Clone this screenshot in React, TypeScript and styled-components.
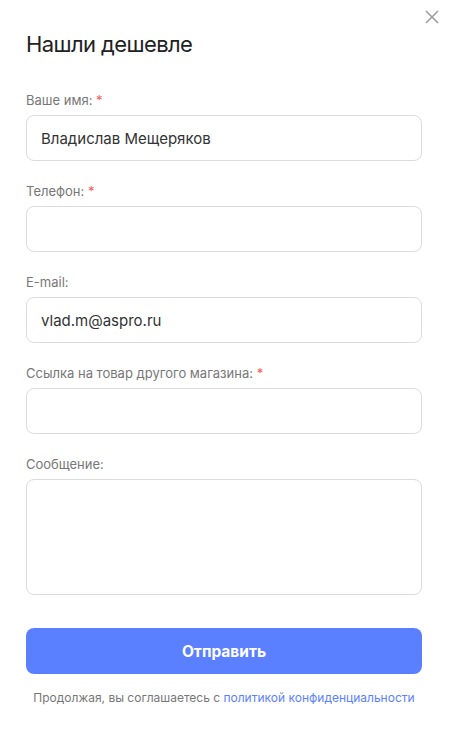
import React from "react";
import styled, { createGlobalStyle } from "styled-components";

const Global = createGlobalStyle`
  html, body { margin: 0; padding: 0; background: #fff; }
  body { font-family: Inter, "Noto Sans", sans-serif; -webkit-font-smoothing: antialiased; }
  * { box-sizing: border-box; }
`;

const Modal = styled.div`
  position: relative;
  width: 449px;
  min-height: 737px;
  background: #fff;
  padding: 31px 27px 0 26px;
  display: flex;
  flex-direction: column;
`;

const Close = styled.button`
  position: absolute;
  top: 9px;
  right: 9px;
  width: 16px;
  height: 16px;
  padding: 0;
  border: 0;
  background: transparent;
  display: flex;
  align-items: center;
  justify-content: center;
  cursor: pointer;
`;

const Title = styled.h1`
  margin: 0 0 34px;
  font-size: 22px;
  line-height: 26px;
  font-weight: 400;
  letter-spacing: -0.6px;
  color: #222;
`;

const Fields = styled.div`
  display: flex;
  flex-direction: column;
  gap: 21px;
`;

const Field = styled.label`
  display: flex;
  flex-direction: column;
  gap: 6px;
`;

const Label = styled.span`
  font-size: 13px;
  line-height: 18px;
  color: #777;
`;

const Star = styled.span`
  color: #f25a5a;
`;

const Input = styled.input`
  height: 46px;
  width: 100%;
  border: 1px solid #dcdcdc;
  border-radius: 8px;
  padding: 0 14px;
  font-family: inherit;
  font-size: 15px;
  color: #333;
  background: #fff;
  outline: none;
`;

const TextArea = styled.textarea`
  height: 116px;
  width: 100%;
  border: 1px solid #dcdcdc;
  border-radius: 8px;
  padding: 12px 14px;
  font-family: inherit;
  font-size: 15px;
  color: #333;
  resize: none;
  outline: none;
  display: block;
`;

const Submit = styled.button`
  margin-top: 33px;
  height: 46px;
  width: 100%;
  border: 0;
  border-radius: 8px;
  background: #5b80ff;
  color: #fff;
  font-family: inherit;
  font-size: 15.5px;
  font-weight: 700;
  cursor: pointer;
`;

const Note = styled.p`
  margin: 16px 0 0;
  text-align: center;
  font-size: 12px;
  line-height: 16px;
  color: #777;
`;

const Link = styled.a`
  color: #5b80ff;
  text-decoration: none;
`;

export default function App() {
  return (
    <>
      <Global />
      <Modal>
        <Close aria-label="Закрыть">
          <svg width="14" height="14" viewBox="0 0 14 14">
            <path d="M1 1 L13 13 M13 1 L1 13" stroke="#9a9a9a" strokeWidth="1.5" fill="none" />
          </svg>
        </Close>
        <Title>Нашли дешевле</Title>
        <Fields>
          <Field>
            <Label>Ваше имя: <Star>*</Star></Label>
            <Input defaultValue="Владислав Мещеряков" />
          </Field>
          <Field>
            <Label>Телефон: <Star>*</Star></Label>
            <Input />
          </Field>
          <Field>
            <Label>E-mail:</Label>
            <Input defaultValue="vlad.m@aspro.ru" />
          </Field>
          <Field>
            <Label>Ссылка на товар другого магазина: <Star>*</Star></Label>
            <Input />
          </Field>
          <Field>
            <Label>Сообщение:</Label>
            <TextArea />
          </Field>
        </Fields>
        <Submit>Отправить</Submit>
        <Note>
          Продолжая, вы соглашаетесь с <Link href="#">политикой конфиденциальности</Link>
        </Note>
      </Modal>
    </>
  );
}
